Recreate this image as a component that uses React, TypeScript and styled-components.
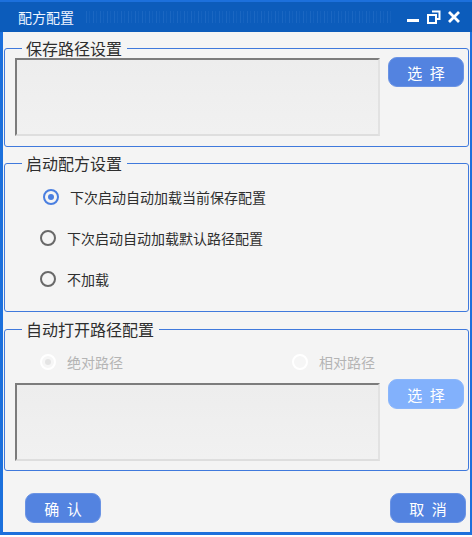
import * as React from 'react'
import styled, { createGlobalStyle } from 'styled-components'

const GlobalStyle = createGlobalStyle`
  html, body {
    margin: 0;
    padding: 0;
    background: #ffffff;
  }
  body {
    font-family: "Noto Sans CJK SC", "Noto Sans", sans-serif;
  }
`

const Frame = styled.div`
  width: 472px;
  height: 535px;
  box-sizing: border-box;
  display: flex;
  flex-direction: column;
  background: #1c70dc;
  border-left: 3px solid #1c70dc;
  border-right: 2px solid #1c70dc;
  border-bottom: 3px solid #1c70dc;
`
const TitleBar = styled.div`
  height: 30px;
  margin-top: 2px;
  margin-left: -3px;
  margin-right: -2px;
  padding: 0 12px 0 18px;
  display: flex;
  align-items: center;
  background: #0c5cbb;
  flex: 0 0 auto;
`
const TitleText = styled.div`
  color: #eef4ff;
  font-size: 14px;
  line-height: 16px;
  flex: 0 0 auto;
`
const Grip = styled.div`
  flex: 1 1 auto;
  height: 12px;
  margin: 0 16px 0 12px;
  background: repeating-linear-gradient(
    90deg,
    rgba(120, 170, 235, 0.14) 0px,
    rgba(120, 170, 235, 0.14) 1px,
    transparent 1px,
    transparent 3px,
    rgba(120, 170, 235, 0.08) 3px,
    rgba(120, 170, 235, 0.08) 4px,
    transparent 4px,
    transparent 7px
  );
`
const Controls = styled.div`
  display: flex;
  align-items: center;
  gap: 7px;
  flex: 0 0 auto;
`
const Content = styled.div`
  flex: 1 1 auto;
  background: #f4f4f4;
  display: flex;
  flex-direction: column;
  padding: 7px 0 0 1px;
`
const Group = styled.fieldset<{ $top: number; $pad: string }>`
  margin: ${p => p.$top}px 1px 0 0;
  padding: ${p => p.$pad};
  border: 1px solid #3f79dc;
  border-radius: 3px;
  min-width: 0;
`
const Legend = styled.legend`
  margin-left: 7px;
  padding: 0 5px 0 4px;
  font-size: 16px;
  line-height: 18px;
  color: #2e2e2e;
`
const PathRow = styled.div<{ $gap: number }>`
  display: flex;
  align-items: flex-start;
  gap: 8px;
  margin-top: ${p => p.$gap}px;
`
const PathBox = styled.div<{ $offset: number }>`
  width: 366px;
  height: 78px;
  margin-top: ${p => p.$offset}px;
  box-sizing: border-box;
  border-top: 2px solid #7c7c7c;
  border-left: 2px solid #7c7c7c;
  border-bottom: 2px solid #dedede;
  border-right: 2px solid #e2e2e2;
  background: linear-gradient(180deg, #ededed, #f1f1f1);
`
const ActionButton = styled.button<{ $disabled?: boolean }>`
  width: 76px;
  height: 30px;
  padding: 0;
  border: 1px solid ${p => (p.$disabled ? '#8ab6fb' : '#6a93e4')};
  border-radius: 9px;
  background: ${p => (p.$disabled ? '#82b1fc' : '#5383e0')};
  color: #ffffff;
  font-family: "Noto Sans CJK SC", "Noto Sans", sans-serif;
  font-size: 15px;
  letter-spacing: 2px;
  text-indent: 2px;
  cursor: pointer;
  flex: 0 0 auto;
`
const RadioList = styled.div`
  display: flex;
  flex-direction: column;
  gap: 21px;
  padding: 15px 0 0 25px;
`
const RadioGrid = styled.div`
  display: grid;
  grid-template-columns: 252px auto;
  padding: 14px 0 0 25px;
`
const RadioItem = styled.label<{ $shift?: number; $disabled?: boolean }>`
  display: flex;
  align-items: center;
  gap: 11px;
  height: 20px;
  margin-left: ${p => p.$shift || 0}px;
  font-size: 14px;
  color: ${p => (p.$disabled ? '#b4b4b4' : '#2e2e2e')};
`
const RadioMark = styled.span<{ $checked?: boolean; $disabled?: boolean }>`
  width: 16px;
  height: 16px;
  box-sizing: border-box;
  border-radius: 50%;
  border: 2px solid
    ${p => (p.$disabled ? '#ffffff' : p.$checked ? '#4a7fe0' : '#686868')};
  background: ${p => (p.$disabled ? '#f6f6f6' : 'transparent')};
  display: flex;
  align-items: center;
  justify-content: center;
  flex: 0 0 auto;
  &::after {
    content: '';
    display: ${p => (p.$checked ? 'block' : 'none')};
    width: 6px;
    height: 6px;
    border-radius: 50%;
    background: ${p => (p.$disabled ? '#e4e4e4' : '#4a7fe0')};
  }
`
const Footer = styled.div`
  display: flex;
  justify-content: space-between;
  padding: 22px 4px 0 21px;
`

type RadioProps = {
  label: string
  checked?: boolean
  disabled?: boolean
  shift?: number
}

const Radio = ({ label, checked, disabled, shift }: RadioProps) => (
  <RadioItem $shift={shift} $disabled={disabled}>
    <RadioMark $checked={checked} $disabled={disabled} />
    {label}
  </RadioItem>
)

const MinimizeIcon = () => (
  <svg width="13" height="14" viewBox="0 0 13 14">
    <rect x="0" y="9" width="12" height="3" fill="#ffffff" />
  </svg>
)
const RestoreIcon = () => (
  <svg width="14" height="14" viewBox="0 0 14 14">
    <path d="M5 1.5h7.5v7.5H9.5" fill="none" stroke="#ffffff" strokeWidth="2" />
    <rect x="1" y="5" width="8" height="8" fill="none" stroke="#ffffff" strokeWidth="2" />
  </svg>
)
const CloseIcon = () => (
  <svg width="12" height="12" viewBox="0 0 12 12">
    <path d="M1 1L11 11M11 1L1 11" stroke="#ffffff" strokeWidth="2.8" />
  </svg>
)

const App = () => {
  return (
    <>
      <GlobalStyle />
      <Frame>
        <TitleBar>
          <TitleText>配方配置</TitleText>
          <Grip />
          <Controls>
            <MinimizeIcon />
            <RestoreIcon />
            <CloseIcon />
          </Controls>
        </TitleBar>
        <Content>
          <Group $top={0} $pad="0 4px 10px 10px">
            <Legend>保存路径设置</Legend>
            <PathRow $gap={0}>
              <PathBox $offset={1} />
              <ActionButton>选 择</ActionButton>
            </PathRow>
          </Group>
          <Group $top={7} $pad="0 4px 22px 10px">
            <Legend>启动配方设置</Legend>
            <RadioList>
              <Radio label="下次启动自动加载当前保存配置" checked shift={3} />
              <Radio label="下次启动自动加载默认路径配置" />
              <Radio label="不加载" />
            </RadioList>
          </Group>
          <Group $top={8} $pad="0 4px 9px 10px">
            <Legend>自动打开路径配置</Legend>
            <RadioGrid>
              <Radio label="绝对路径" checked disabled />
              <Radio label="相对路径" disabled />
            </RadioGrid>
            <PathRow $gap={7}>
              <PathBox $offset={4} />
              <ActionButton $disabled>选 择</ActionButton>
            </PathRow>
          </Group>
          <Footer>
            <ActionButton>确 认</ActionButton>
            <ActionButton>取 消</ActionButton>
          </Footer>
        </Content>
      </Frame>
    </>
  )
}

export default App
